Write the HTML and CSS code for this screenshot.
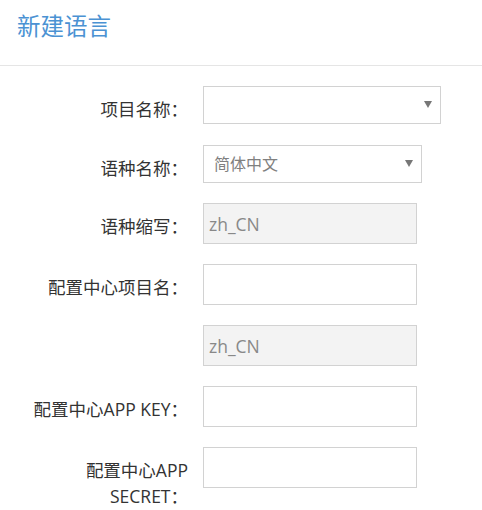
FILE: index.html
```html
<!DOCTYPE html>
<html lang="zh-CN">
<head>
<meta charset="utf-8">
<title>新建语言</title>
<link rel="stylesheet" href="styles.css">
</head>
<body>
<div class="dialog">
  <div class="dialog-header">
    <h1 class="dialog-title">新建语言</h1>
  </div>
  <form class="form">
    <div class="form-row form-row-select">
      <label class="form-label">项目名称：</label>
      <div class="select-wrap select-wide">
        <select class="select"><option></option></select>
        <svg class="select-arrow" width="8" height="7" viewBox="0 0 8 7"><path d="M0 0H8L4 7Z" fill="#777"/></svg>
      </div>
    </div>
    <div class="form-row form-row-select">
      <label class="form-label">语种名称：</label>
      <div class="select-wrap select-mid">
        <select class="select"><option>简体中文</option></select>
        <svg class="select-arrow" width="8" height="7" viewBox="0 0 8 7"><path d="M0 0H8L4 7Z" fill="#777"/></svg>
      </div>
    </div>
    <div class="form-row">
      <label class="form-label">语种缩写：</label>
      <input class="input" type="text" value="zh_CN" disabled>
    </div>
    <div class="form-row">
      <label class="form-label">配置中心项目名：</label>
      <input class="input" type="text" value="">
    </div>
    <div class="form-row">
      <label class="form-label"></label>
      <input class="input" type="text" value="zh_CN" disabled>
    </div>
    <div class="form-row">
      <label class="form-label">配置中心APP KEY：</label>
      <input class="input" type="text" value="">
    </div>
    <div class="form-row">
      <label class="form-label">配置中心APP SECRET：</label>
      <input class="input" type="text" value="">
    </div>
  </form>
</div>
</body>
</html>
```
FILE: styles.css
```css
html, body {
  margin: 0;
  padding: 0;
  background: #fff;
}

body {
  font-family: "Open Sans", "Noto Sans CJK SC", sans-serif;
  color: #333;
}

.dialog-header {
  height: 66px;
  box-sizing: border-box;
  padding: 10px 17px 0;
  border-bottom: 1px solid #e5e5e5;
}

.dialog-title {
  margin: 0;
  font-size: 23.5px;
  line-height: 32px;
  font-weight: normal;
  color: #4b92d3;
}

.form {
  padding-top: 20px;
}

.form-row {
  display: flex;
  align-items: flex-start;
  margin-bottom: 20px;
}

.form-row-select {
  margin-bottom: 20.5px;
}

.form-label {
  flex: none;
  width: 160px;
  margin-left: 28px;
  margin-right: 15px;
  padding-top: 10px;
  min-height: 1px;
  text-align: right;
  font-size: 17.5px;
  line-height: 26px;
  color: #333;
}

.select-wrap {
  position: relative;
  height: 38px;
}

.select-wide { width: 238px; }
.select-mid { width: 219px; }

.select {
  appearance: none;
  -webkit-appearance: none;
  display: block;
  width: 100%;
  height: 100%;
  box-sizing: border-box;
  margin: 0;
  padding: 0 24px 0 10px;
  border: 1px solid #d2d2d2;
  border-radius: 0;
  background: #fff;
  font-family: "Open Sans", "Noto Sans CJK SC", sans-serif;
  font-size: 16px;
  color: #808080;
  outline: none;
}

.select-arrow {
  position: absolute;
  right: 9px;
  top: 50%;
  margin-top: -4px;
}

.input {
  display: block;
  width: 214px;
  height: 41px;
  box-sizing: border-box;
  margin: 0;
  padding: 0 5px;
  border: 1px solid #d2d2d2;
  border-radius: 0;
  background: #fff;
  font-family: "Open Sans", "Noto Sans CJK SC", sans-serif;
  font-size: 17.5px;
  color: #888;
  outline: none;
}

.input:disabled {
  background: #f3f3f3;
  color: #888;
  -webkit-text-fill-color: #888;
}
```
